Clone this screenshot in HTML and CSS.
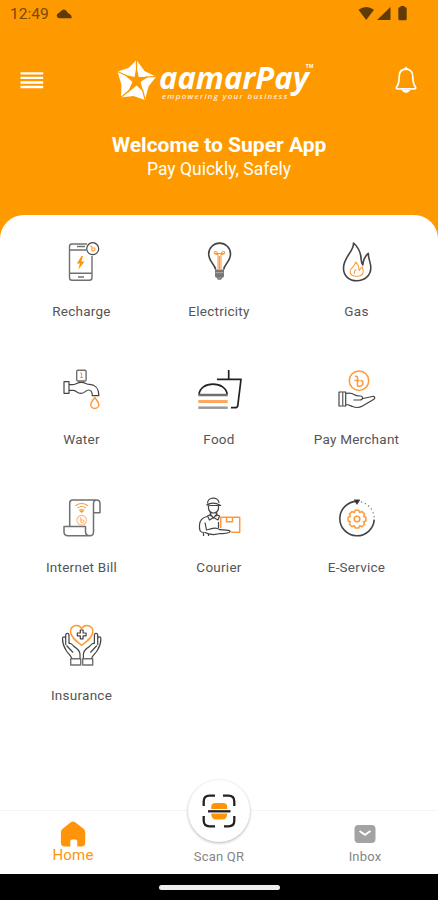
FILE: index.html
```html
<!DOCTYPE html>
<html lang="en">
<head>
    <meta charset="UTF-8">
    <meta name="viewport" content="width=device-width, initial-scale=1.0">
    <title>aamarPay</title>
    <link rel="stylesheet" href="styles.css">
</head>
<body>
    <header class="header">
        <div class="status-bar">
            <span class="time">12:49</span>
            <svg class="cloud" width="16" height="10" viewBox="0 0 16 10"><path d="M3 9.300a2.800 2.800 0 0 1-.3-5.400L6 1.200Q8-.5 10 1.500l2.500 3Q16 5.500 15.500 9.300z"/></svg>
            <svg class="signals" width="50" height="16" viewBox="0 0 50 16">
                <path d="M0.500 3.700Q8.200-1.600 16 3.700L8.200 14z"/>
                <path d="M32.500 1v13H19z"/>
                <path d="M42.500 1.200V0h4v1.200h1q1.200 0 1.200 1.200v10.700q0 1.200-1.200 1.200h-6q-1.200 0-1.200-1.200V2.400q0-1.200 1.200-1.200z"/>
            </svg>
        </div>
        <div class="top-bar">
            <svg class="menu" width="24" height="18" viewBox="0 0 24 18"><path d="M.5 2.300h22.700M.5 6.900h22.700M.5 11.500h22.700M.5 16h22.700"/></svg>
            <div class="logo">
                <svg class="star" width="40" height="42" viewBox="0 0 40 42">
                    <path class="star-fill" d="M19.500 1L27.500 12 39 17.800 31.500 27.500 28 41 16.500 37 4 38.500 4.500 26 0.500 12.500 11.500 9z"/>
                    <path class="star-cut" d="M19.500 8l2.300 10 9.700-.2-8 5.200 3 10-7-6.500-9.500 8 5.500-11.500-8.500-7.500 10.500 2.500z"/>
                    <path class="star-line" d="M19.500 1v12M38.500 17.700l-10 .3M28 40.500l-2.500-10M4 38.500l8-7M.5 12.500l9 4"/>
                </svg>
                <div class="wordmark">
                    <span class="brand">aamarPay</span><span class="tm">TM</span>
                    <span class="slogan">empowering your business</span>
                </div>
            </div>
            <svg class="bell" width="22" height="29" viewBox="0 0 22 29">
                <path d="M11 3.200c-4.500 0-6.800 3-6.800 7.500 0 6-.8 7.800-2.600 10.300-.7 1.100-.2 1.900 1 1.900h16.800c1.200 0 1.700-.8 1-1.900-1.800-2.500-2.600-4.300-2.600-10.300 0-4.500-2.300-7.500-6.800-7.500z"/>
                <path class="bell-fill" d="M8.500 3.500L11 .5l2.500 3zM6.500 24h9q-4.500 6-9 0z"/>
            </svg>
        </div>
        <h1>Welcome to Super App</h1>
        <p>Pay Quickly, Safely</p>
    </header>

    <main class="services">
        <div class="service">
            <svg viewBox="0 0 48 48">
                <g class="grey"><path d="M29 6H14q-2.500 0-2.500 2.500v31q0 2.800 2.500 2.800h17.500q2.500 0 2.500-2.800V18M11.500 12H28M11.500 35.300H34"/><path d="M19 8.500h8M20 39h6"/></g>
                <circle cx="34.700" cy="10.700" r="6"/>
                <path class="fill-orange" d="M23.500 18l-4.600 7.500h3l-1.600 6 6.300-8h-3.300l1.700-5.500z"/>
                <path class="orange" d="M32.500 7.800l1.300 1v4M33.800 10h3q1 3-3 3"/>
            </svg>
            <span>Recharge</span>
        </div>
        <div class="service">
            <svg viewBox="0 0 48 48">
                <path class="thick" d="M20.500 31.500c0-5-6.800-7.500-6.800-15.500a10.900 10.900 0 0 1 21.800 0c0 8-6.800 10.500-6.800 15.500"/>
                <path class="orange" d="M23 31V16.500M26 31V16.500M20 15.500h9M23 16.500c-5 0-4-3.500-2-3s2 3 2 3M26 16.500c5 0 4-3.500 2-3s-2 3-2 3M24.500 18v13"/>
                <path class="fill-grey" d="M20 31.500h9v6.500q0 1.500-1.500 1.500l-1.500 2.300h-3L21.500 39.500Q20 39.500 20 38z"/>
                <path class="white" d="M20.500 34.700h8M23.500 39.800h2"/>
            </svg>
            <span>Electricity</span>
        </div>
        <div class="service">
            <svg viewBox="0 0 48 48">
                <path class="thick" d="M20.500 5c.5 8.500-10 14-10 25 0 7.800 5.500 12.800 13.300 12.800S37.800 37.500 37.800 29.800c0-6-2.500-8-2.500-14.500-3.500 3-5 6.500-5.500 11.700-2-2-1.200-5.500-2.200-10-1-5-3.700-9-7.100-12z"/>
                <path class="orange" d="M22.500 24c.5 3.500-5.300 5.500-5.300 9.500 0 3 2.500 4.800 6.500 4.800s6.500-2 6.500-5c0-2-.7-2.800-.7-4.300-1.800.8-2.800 2-3 3.500-1.500-1.500.5-5.500-4-8.500zM21.500 36q-1-3 2-4.500"/>
            </svg>
            <span>Gas</span>
        </div>
        <div class="service">
            <svg viewBox="0 0 48 48">
                <g class="grey"><path d="M18.700 5.500q0-1.200 1.200-1.200h7q1.200 0 1.200 1.200v8.300q0 1.200-1.200 1.200h-7q-1.200 0-1.200-1.200z"/><path d="M21.500 15v1.500M25.500 15v1.500"/></g>
                <path d="M6 15.700h5v11.600H6zM11 18.700h3.500c3.500 0 4-2.300 9-2.300 4 0 4.500 2 8 2 5 0 9.300 3.300 9.300 11.300h-6.500c0-4-1.300-5.700-4-5.700s-3 3.400-7.300 3.400c-4.500 0-4.500-3-8-3H11"/>
                <path class="orange" d="M23.500 7v5M22 11.500h3M23.500 7h-1.500"/>
                <path class="orange drop" d="M36.800 31.500c1.500 2.500 4 4.500 4 7a4 4 0 0 1-8 0c0-2.500 2.500-4.500 4-7z"/>
            </svg>
            <span>Water</span>
        </div>
        <div class="service">
            <svg viewBox="0 0 48 48">
                <path class="black" d="M4 28.500c.7-6.500 6.500-10.300 14-10.300s13.500 3.800 14.200 10.300M22 13.300h24.700M33.700 4v9.300M46 13.300l-3.200 26q-.3 2.400-2.800 2.400h-4"/>
                <path class="bun grey" d="M3.300 29h29.400"/>
                <path class="bun patty" d="M3.300 35.500h29.400"/>
                <path class="bun light" d="M3.300 41.700h29.400"/>
            </svg>
            <span>Food</span>
        </div>
        <div class="service">
            <svg viewBox="0 0 48 48">
                <circle class="orange drop" cx="26" cy="14.700" r="9.700"/>
                <path class="orange drop" d="M22 10.500q2.500-1 2.500 1.500v8q5.500 1 5.500-3.500 0-2-2.500-2M21.500 14.500h5"/>
                <path d="M6 26h6.700v14H6zM12.700 27.500c4-1 5.500-1 8.300 1 2 1.600 3.500 1.500 6.500 1.500 2.500 0 3 3.300 0 3.800l-7 .2M30 32.500l9.300-2c2.500-.3 3.500 1.800 1.200 3L29.500 40c-3.500 2-6.500 2-10 .5-3-1.200-4.300-2-6.800-2"/>
                <path class="grey" d="M9.700 26v14"/>
            </svg>
            <span>Pay Merchant</span>
        </div>
        <div class="service">
            <svg viewBox="0 0 48 48">
                <path class="grey drop" d="M11.700 32.500V9q0-3 3-3h23.800q3.500 0 3.500 3.500v9.200h-6.500M38.500 6q-3 0-3 3.500V38q0 3.700-3.500 3.700H10q-4 0-4-4v-5.200h21.500v5q0 4.200 4.500 4.200"/>
                <path class="orange" d="M17.500 11.700q6.200-4.500 12.400 0M19.500 14q4.200-3 8.400 0M21.300 16.300q2.400-1.600 4.800 0"/>
                <path class="fill-orange" d="M21 16.500h5.400L23.700 19z"/>
                <circle class="orange faint" cx="23.700" cy="26.200" r="4.800"/>
                <path class="orange faint" d="M22 23.500l1 1v4q3 .5 3-1.500 0-1-1.500-1M21.500 26h3"/>
            </svg>
            <span>Internet Bill</span>
        </div>
        <div class="service">
            <svg viewBox="0 0 48 48">
                <path d="M12.500 9.500c0-7 11-7 11.500-.5M11.700 11q6-4 14 .5h-10zM13.500 12v2.500q1 4.500 5 4.500t5-4.500V12M15.300 18.500v3.700M21.700 18.500v3.700M12.500 22l3-1.500 3 3.500 3-3.500 3 1.500-1.500 4-4.500-2.500-4 2.500z"/>
                <path d="M12 22.500q-7 1.500-7.500 8.500c-.5 6 1 7.500 4.500 7.500M10 28.500l1.500 7.500c8-2 9.500-2.700 13.500-.3l8.500.7q3 .3.500 2.100-4 1.500-8.500 1l-7 1.200q-5.500-.5-9-2.500M8.500 38.500V42M23.500 28v6M13.500 40.500V42"/>
                <path class="orange drop" d="M25.700 34V23.300h19v15H36M31.500 23.500v4.300h6v-4.300"/>
            </svg>
            <span>Courier</span>
        </div>
        <div class="service">
            <svg viewBox="0 0 48 48">
                <path class="thick" d="M24 7.400a17.200 17.200 0 1 0 17.200 18.200"/>
                <path class="dotted" d="M24 7.400a17.200 17.200 0 0 1 17.200 18"/>
                <path class="arrow" d="M21.500 6h5l-2.500 4z"/>
                <path class="orange drop" d="M22.200 16.200h3.600l.8 2.300 2.400-1 2.600 2.600-1 2.400 2.300.8V27l-2.300.8 1 2.400-2.600 2.600-2.400-1-.8 2.300h-3.600l-.8-2.300-2.400 1-2.600-2.600 1-2.400-2.300-.8v-3.700l2.300-.8-1-2.400 2.600-2.600 2.400 1z"/>
                <circle class="orange drop" cx="24" cy="25" r="2.800"/>
            </svg>
            <span>E-Service</span>
        </div>
        <div class="service">
            <svg viewBox="0 0 48 48">
                <path class="orange drop" d="M23.700 23.300C17 18.300 12.500 14.500 12.500 9.800c0-6.500 8-8.500 11.200-3.200 3.200-5.300 11.200-3.300 11.200 3.200 0 4.700-4.500 8.500-11.200 13.500z"/>
                <path d="M22.300 8h2.800v3h3v2.800h-3v3h-2.800v-3h-3V11h3z"/>
                <g id="hand"><path d="M14 36.700c-1-3-4-5-6-8.500-2.500-4-3.500-8-3.500-11.500 0-2.500 3-2.500 3.200 0M7.700 23v-9.500c0-3 3.300-3 3.300 0v8.200M8.500 23.500l6.500 7M11 21.500c2-1 3 .5 4.500 2.500 4 3.500 6.500 4 6.500 8.500v4.200"/><path class="grey" d="M12.700 36.700h10V43h-10z"/></g>
                <use href="#hand" transform="matrix(-1 0 0 1 47.400 0)"/>
            </svg>
            <span>Insurance</span>
        </div>
    </main>

    <nav class="bottom-nav">
        <a class="tab active">
            <svg width="26" height="26" viewBox="0 0 26 26"><path d="M10.800 1.200q2.200-1.600 4.400 0l8.300 6.500q1.700 1.300 1.700 3.500v10.600q0 3.600-3.600 3.600H17.300v-5.100q0-1.800-1.800-1.800h-3.400q-1.800 0-1.800 1.800v5.100H4.500q-3.600 0-3.600-3.600V11.200q0-2.200 1.700-3.500z"/></svg>
            <span>Home</span>
        </a>
        <a class="tab scan">
            <div class="scan-button">
                <svg width="34" height="34" viewBox="0 0 34 34">
                    <path class="fill-orange" d="M9.200 15V13q0-4 4-4h8q4 0 4 4v2zM9.200 19.500h16q0 6-5 6h-6q-5 0-5-6z"/>
                    <path class="frame" d="M1.700 12V7.500q0-5.800 5.800-5.800H13M21 1.700h5.500q5.800 0 5.800 5.800V12M32.300 22v4.500q0 5.800-5.800 5.800H22M13 32.300H7.500q-5.800 0-5.800-5.800V22"/>
                    <path class="beam" d="M6 17.300h22.500"/>
                </svg>
            </div>
            <span>Scan QR</span>
        </a>
        <a class="tab">
            <svg width="22" height="18" viewBox="0 0 22 18"><rect width="21" height="18" x=".5" rx="4"/><path class="flap" d="M5.500 6l5.500 3.800L16.500 6"/></svg>
            <span>Inbox</span>
        </a>
    </nav>
    <div class="gesture-bar"><div class="pill"></div></div>
</body>
</html>
```

FILE: styles.css
```css
body {
    margin: 0;
    height: 900px;
    display: flex;
    flex-direction: column;
    overflow: hidden;
    background-color: #fe9a00;
    font-family: Roboto, sans-serif;
}
svg {
    display: block;
    flex-shrink: 0;
}
.header {
    height: 215px;
    color: #fff;
    text-align: center;
}
.status-bar {
    display: flex;
    align-items: center;
    height: 28px;
    padding: 0 30px 0 10px;
    color: #77490a;
    font-size: 15.500px;
}
.cloud {
    margin-left: 7px;
    fill: #613b05;
}
.signals {
    margin-left: auto;
    fill: #613b05;
}
.top-bar {
    display: flex;
    align-items: center;
    justify-content: space-between;
    height: 54px;
    margin-top: 25px;
    padding: 0 21px 0 20px;
}
.menu {
    fill: none;
    stroke: #fff;
    stroke-width: 2.300;
}
.logo {
    display: flex;
    align-items: center;
    width: 202px;
    margin-right: 3px;
}
.star-fill {
    fill: #fff;
}
.star-cut {
    fill: #fe9a00;
}
.star-line {
    fill: none;
    stroke: #fe9a00;
    stroke-width: 1.200;
}
.wordmark {
    display: grid;
    grid-template-columns: auto auto;
    justify-content: start;
    height: 42px;
    padding-left: 2px;
    font-family: "Open Sans", sans-serif;
    font-style: italic;
}
.brand {
    font-size: 31px;
    line-height: 36px;
    height: 30px;
    font-weight: 700;
}
.tm {
    margin-left: -3px;
    font-size: 5px;
    font-style: normal;
    font-weight: 700;
    line-height: 14px;
}
.slogan {
    grid-column: 1 / 3;
    text-align: left;
    padding-left: 3px;
    font-size: 8px;
    line-height: 9px;
    letter-spacing: 1.350px;
    white-space: nowrap;
}
.bell {
    fill: none;
    stroke: #fff;
    stroke-width: 1.700;
}
.bell-fill {
    fill: #fff;
    stroke: none;
}
.header h1 {
    margin: 26px 0 0;
    font-size: 21px;
    line-height: 24px;
    font-weight: 700;
}
.header p {
    margin: 0;
    font-size: 17.500px;
    line-height: 24px;
}

/* services grid */
.services {
    flex: 1;
    display: grid;
    grid-template-columns: repeat(3, 137.500px);
    grid-auto-rows: 128px;
    justify-content: center;
    padding-top: 23px;
    background-color: #fff;
    border-radius: 24px 24px 0 0;
}
.service {
    display: flex;
    flex-direction: column;
    align-items: center;
    gap: 16px;
    font-size: 13.500px;
    line-height: 18px;
    letter-spacing: 0.250px;
    color: #555;
}
.service svg {
    width: 48px;
    height: 48px;
    fill: none;
    stroke: #444;
    stroke-width: 1.200;
    stroke-linejoin: round;
}
.service .thick {
    stroke-width: 1.600;
}
.service .grey {
    stroke: #707070;
    stroke-width: 1.400;
}
.service .orange {
    stroke: #ff9a38;
    stroke-width: 1.100;
}
.service .drop {
    stroke-width: 1.500;
}
.service .faint {
    opacity: 0.7;
}
.service .white {
    stroke: #bbb;
    stroke-width: 0.800;
}
.service .black {
    stroke: #222;
    stroke-width: 1.700;
}
.service .bun {
    stroke-width: 2.500;
}
.service .patty {
    stroke: #ffa861;
    stroke-width: 3;
}
.service .light {
    stroke: #999;
}
.service .dotted {
    stroke: #888;
    stroke-dasharray: 1.500 2.500;
}
.service .arrow {
    fill: #222;
}
.service .fill-orange,
.scan-button .fill-orange {
    fill: #ff9409;
    stroke: none;
}
.service .fill-grey {
    fill: #777;
    stroke: none;
}

/* bottom navigation */
.bottom-nav {
    display: grid;
    grid-template-columns: repeat(3, 1fr);
    grid-template-rows: 63px;
    height: 64px;
    box-sizing: border-box;
    border-top: 1px solid #f5f5f5;
    background-color: #fff;
}
.tab {
    display: flex;
    flex-direction: column;
    align-items: center;
    justify-content: flex-end;
    box-sizing: border-box;
    height: 63px;
    padding-bottom: 9px;
    font-size: 13px;
    line-height: 16px;
    letter-spacing: 0.200px;
    color: #858585;
    fill: #a3a3a3;
}
.tab svg {
    margin-bottom: 6px;
}
.tab.active {
    padding-bottom: 11px;
    color: #ff9409;
    fill: #ff9409;
    font-size: 15px;
}
.tab.active svg {
    margin-bottom: 0;
}
.tab .flap {
    fill: none;
    stroke: #fff;
    stroke-width: 2;
}
/* sticks out above the bar */
.scan-button {
    display: flex;
    align-items: center;
    justify-content: center;
    flex-shrink: 0;
    width: 62px;
    height: 62px;
    margin-bottom: 7px;
    border-radius: 50%;
    background-color: #fff;
    box-shadow: 0 1px 3px rgba(0, 0, 0, 0.300);
}
.tab .scan-button svg {
    margin: 0;
}
.frame,
.beam {
    fill: none;
    stroke: #222;
    stroke-width: 2.300;
}
.gesture-bar {
    display: flex;
    align-items: center;
    justify-content: center;
    height: 26px;
    background-color: #000;
}
.pill {
    width: 121px;
    height: 5px;
    border-radius: 3px;
    background-color: #eee;
}
```
